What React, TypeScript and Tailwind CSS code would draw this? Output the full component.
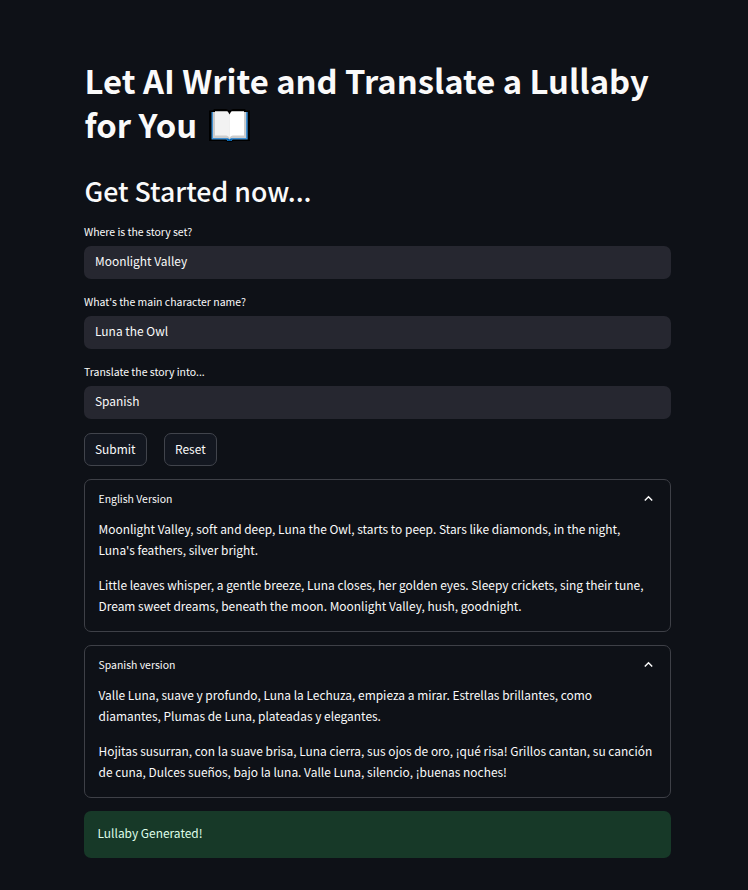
import type { ReactNode } from 'react';

function BookIcon() {
  return (
    <svg className="ml-[12px] mt-[7px] h-[33px] w-[41px]" viewBox="0 0 41 33" role="img" aria-label="Open book">
      <path d="M0 1.5H4L5 0H17L20.5 1.5L24 0H36L37 1.5H41V32H24L22.5 33H18.500L17 32H0Z" fill="#000" />
      <path d="M2.500 3H38.700V30.500H23.500L22.500 32H18.500L17.500 30.500H2.500Z" fill="#3f8fd2" />
      <path d="M18 30H23L22.300 32H18.700Z" fill="#0063b1" />
      <path d="M4 3H37V29H22L20.500 30.500L19 29H4Z" fill="#cccccc" />
      <path d="M6 2.200H18C19.500 2.200 20.300 3.500 20.500 5V29C19.800 27.500 18.500 26.500 17 26.500H6Z" fill="#f2f2f2" />
      <path d="M35 2.200H23C21.500 2.200 20.700 3.500 20.500 5V29C21.200 27.500 22.500 26.500 24 26.500H35Z" fill="#fff" />
      <path d="M18.300 1.600H22.700L20.500 5.500Z" fill="#000" />
    </svg>
  );
}

function Field({ label, value }: { label: string; value: string }) {
  return (
    <div className="mb-[15px] h-[55px]">
      <div className="h-[22px] text-[10.480px] leading-[16px]">{label}</div>
      <div className="flex h-[33px] items-center rounded-[7px] bg-[#262730] px-[11px] pb-[3px] text-[11.94px]">{value}</div>
    </div>
  );
}

function Button({ width, children }: { width: string; children: ReactNode }) {
  return (
    <button className={`${width} flex h-[33px] items-center rounded-[7px] border border-[#41444c] bg-[#131720] pl-[10px] pb-px text-[11.94px]`}>
      {children}
    </button>
  );
}

function Expander({ title, paragraphs }: { title: string; paragraphs: string[][] }) {
  return (
    <section className="mb-[13px] h-[153px] rounded-[7px] border border-[#3e4047] px-[13.500px] pt-[10px]">
      <div className="flex h-[28px] justify-between">
        <span className="text-[10.45px] leading-[17px]">{title}</span>
        <svg className="mr-[3px] mt-[3px] h-[11px] w-[11px]" viewBox="0 0 11 11" fill="none" stroke="#fafafa" strokeWidth="1.500">
          <path d="M1.800 7.500L5.500 3.800L9.200 7.500" />
        </svg>
      </div>
      {paragraphs.map((lines) => (
        <p key={lines[0]} className="mb-[14px] text-[11.94px] leading-[21px] whitespace-nowrap">
          {lines.map((line) => (
            <span key={line} className="block">{line}</span>
          ))}
        </p>
      ))}
    </section>
  );
}

export default function App() {
  return (
    <main className="h-[890px] overflow-hidden bg-[#0e1117] pl-[84px] pr-[77px] pt-[58px] font-['Noto_Sans_CJK_SC','Noto_Sans',sans-serif] text-[#fafafa]">
      <h1 className="h-[116px] pl-[0.500px] text-[32.800px] leading-[44px] font-bold whitespace-nowrap">
        <span className="block">Let AI Write and Translate a Lullaby</span>
        <span className="flex">
          for You
          <BookIcon />
        </span>
      </h1>
      <h2 className="h-[50px] pl-[0.500px] text-[26.700px] leading-[34px] font-medium">Get Started now...</h2>
      <div>
        <Field label="Where is the story set?" value="Moonlight Valley" />
        <Field label="What's the main character name?" value="Luna the Owl" />
        <Field label="Translate the story into..." value="Spanish" />
      </div>
      <div className="-mt-px mb-[13px] flex gap-[17px]">
        <Button width="w-[63px]">Submit</Button>
        <Button width="w-[53px]">Reset</Button>
      </div>
      <Expander
        title="English Version"
        paragraphs={[
          ['Moonlight Valley, soft and deep, Luna the Owl, starts to peep. Stars like diamonds, in the night,', "Luna's feathers, silver bright."],
          ['Little leaves whisper, a gentle breeze, Luna closes, her golden eyes. Sleepy crickets, sing their tune,', 'Dream sweet dreams, beneath the moon. Moonlight Valley, hush, goodnight.'],
        ]}
      />
      <Expander
        title="Spanish version"
        paragraphs={[
          ['Valle Luna, suave y profundo, Luna la Lechuza, empieza a mirar. Estrellas brillantes, como', 'diamantes, Plumas de Luna, plateadas y elegantes.'],
          ['Hojitas susurran, con la suave brisa, Luna cierra, sus ojos de oro, ¡qué risa! Grillos cantan, su canción', 'de cuna, Dulces sueños, bajo la luna. Valle Luna, silencio, ¡buenas noches!'],
        ]}
      />
      <div className="flex h-[47px] items-center rounded-[7px] bg-[#173928] px-[13.500px] pb-[3px] text-[11.94px] text-[#dffde9]">
        Lullaby Generated!
      </div>
    </main>
  );
}
